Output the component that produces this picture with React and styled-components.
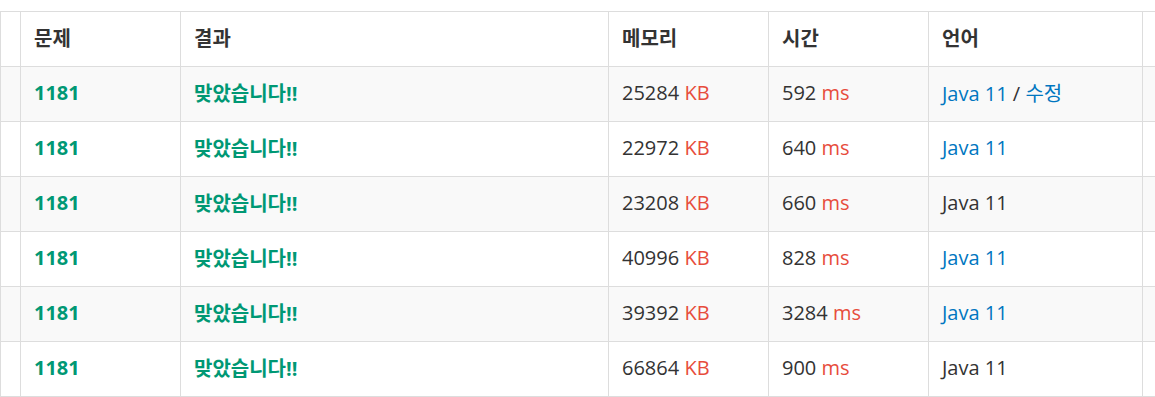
import styled, { createGlobalStyle } from 'styled-components';

const GlobalStyle = createGlobalStyle`
  html, body {
    margin: 0;
    padding: 0;
    background: #fff;
  }
  body {
    font-family: 'Open Sans', 'Noto Sans CJK KR', sans-serif;
    color: #333;
  }
`;

const Page = styled.div`
  width: 1155px;
  height: 397px;
  overflow: hidden;
  padding-top: 11px;
  box-sizing: border-box;
`;

const Table = styled.table`
  width: 1175px;
  table-layout: fixed;
  border-collapse: collapse;
  font-size: 20px;
`;

const Row = styled.tr`
  height: 55px;
  background: ${(props) => (props.$striped ? '#f9f9f9' : '#fff')};
`;

const Head = styled.th`
  text-align: left;
  font-weight: 700;
  color: #333;
  padding: 0 13px 3px;
  border: 1px solid #ddd;
  vertical-align: middle;
`;

const Cell = styled.td`
  padding: 0 13px 3px;
  border: 1px solid #ddd;
  vertical-align: middle;
  white-space: nowrap;
`;

const ProblemLink = styled.span`
  color: #009874;
  font-weight: 700;
`;

const Result = styled.span`
  color: #009874;
  font-weight: 700;
`;

const Unit = styled.span`
  color: #e74c3c;
`;

const Lang = styled.span`
  color: ${(props) => (props.$link ? '#0076c0' : '#333')};
`;

const submissions = [
  { memory: 25284, time: 592, link: true, edit: true },
  { memory: 22972, time: 640, link: true },
  { memory: 23208, time: 660, link: false },
  { memory: 40996, time: 828, link: true },
  { memory: 39392, time: 3284, link: true },
  { memory: 66864, time: 900, link: false },
];

const App = () => {
  return (
    <Page>
      <GlobalStyle />
      <Table>
        <colgroup>
          <col style={{ width: 20 }} />
          <col style={{ width: 160 }} />
          <col style={{ width: 428 }} />
          <col style={{ width: 160 }} />
          <col style={{ width: 160 }} />
          <col style={{ width: 214 }} />
          <col style={{ width: 33 }} />
        </colgroup>
        <thead>
          <Row>
            <Head />
            <Head>문제</Head>
            <Head>결과</Head>
            <Head>메모리</Head>
            <Head>시간</Head>
            <Head>언어</Head>
            <Head />
          </Row>
        </thead>
        <tbody>
          {submissions.map((s, i) => (
            <Row key={i} $striped={i % 2 === 0}>
              <Cell />
              <Cell>
                <ProblemLink>1181</ProblemLink>
              </Cell>
              <Cell>
                <Result>맞았습니다!!</Result>
              </Cell>
              <Cell>
                {s.memory} <Unit>KB</Unit>
              </Cell>
              <Cell>
                {s.time} <Unit>ms</Unit>
              </Cell>
              <Cell>
                <Lang $link={s.link}>Java 11</Lang>
                {s.edit && (
                  <>
                    {' / '}
                    <Lang $link>수정</Lang>
                  </>
                )}
              </Cell>
              <Cell />
            </Row>
          ))}
        </tbody>
      </Table>
    </Page>
  );
};

export default App;
